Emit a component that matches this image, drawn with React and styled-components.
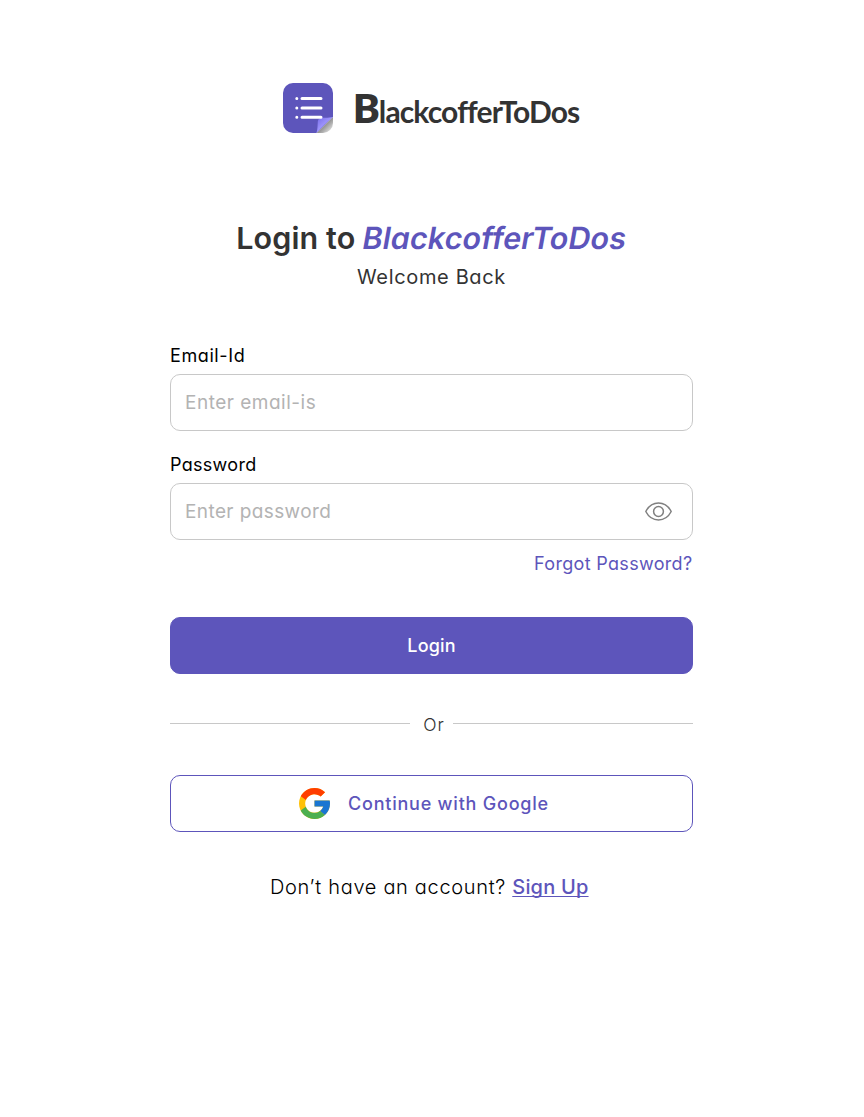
import React from "react";
import styled, { createGlobalStyle } from "styled-components";

const PURPLE = "#5d55bb";
const LINE = "#c8c8c8";

const GlobalStyle = createGlobalStyle`
  *, *::before, *::after { box-sizing: border-box; }
  body {
    margin: 0;
    background: #fff;
    color: #000;
    font-family: Inter, "Open Sans", sans-serif;
    font-feature-settings: "cv11" 1;
  }
`;

const Page = styled.main`
  width: 523px;
  min-height: 1117px;
  margin-left: 170px;
  padding-top: 83px;
  display: flex;
  flex-direction: column;
`;

const Brand = styled.header`
  display: flex;
  gap: 20px;
  height: 50px;
  padding-left: 113px;
`;

const BrandName = styled.span`
  font-family: Lato, sans-serif;
  font-weight: 700;
  font-size: 30px;
  line-height: 50px;
  letter-spacing: -0.85px;
  color: #333;
  white-space: nowrap;
`;

const Initial = styled.span`
  font-size: 40px;
  font-weight: 800;
  letter-spacing: -1px;
`;

const Title = styled.h1`
  margin: 80px 0 0;
  font-size: 30.5px;
  line-height: 49px;
  font-weight: 600;
  letter-spacing: 0.12px;
  color: #333;
  text-align: center;
  white-space: nowrap;
`;

/* Slanted roman letters: the true italic has a descending f. */
const Accent = styled.em`
  display: inline-block;
  font-style: normal;
  transform: skewX(-10deg);
  color: ${PURPLE};
`;

const Subtitle = styled.p`
  margin: 0;
  font-size: 20px;
  line-height: 30px;
  letter-spacing: 0.65px;
  color: #333;
  text-align: center;
`;

const Form = styled.form`
  margin-top: 51px;
  display: flex;
  flex-direction: column;
`;

const Field = styled.div`
  display: flex;
  flex-direction: column;
  margin-bottom: ${(p) => p.$gap || 0}px;
`;

const Label = styled.label`
  height: 31px;
  font-size: 18px;
  line-height: 26px;
  letter-spacing: ${(p) => p.$spacing || 0}px;
`;

const InputBox = styled.div`
  display: flex;
  align-items: center;
  height: 57px;
  padding: 0 20px 0 14px;
  border: 1px solid ${LINE};
  border-radius: 10px;
`;

const Input = styled.input`
  flex: 1;
  min-width: 0;
  padding: 0;
  border: 0;
  outline: 0;
  background: none;
  font: inherit;
  font-feature-settings: inherit;
  font-size: 19px;
  line-height: 28px;
  letter-spacing: ${(p) => p.$spacing || 0}px;
  &::placeholder { color: #b3b3b3; opacity: 1; }
`;

const Forgot = styled.a`
  align-self: flex-end;
  margin-top: 11px;
  margin-right: 0.5px;
  font-size: 18px;
  line-height: 26px;
  letter-spacing: 0.32px;
  color: ${PURPLE};
`;

const Button = styled.button`
  display: flex;
  align-items: center;
  justify-content: center;
  width: 100%;
  height: 57px;
  padding: 0;
  border: 1px solid ${PURPLE};
  border-radius: 10px;
  font: inherit;
  font-feature-settings: inherit;
  font-size: 18px;
  font-weight: 500;
`;

const LoginButton = styled(Button)`
  margin-top: 40px;
  background: ${PURPLE};
  color: #fff;
  letter-spacing: 0.15px;
`;

const GoogleButton = styled(Button)`
  justify-content: flex-start;
  gap: 18px;
  padding-left: 128px;
  background: #fff;
  color: ${PURPLE};
  letter-spacing: 0.78px;
`;

const Divider = styled.div`
  display: flex;
  align-items: center;
  margin: 37px 0 38px;
  height: 26px;
`;

const Rule = styled.span`
  width: 240px;
  height: 1px;
  margin-bottom: 2px;
  background: ${LINE};
`;

const DividerText = styled.span`
  flex: 1;
  padding: 2px 0 0 5px;
  text-align: center;
  font-size: 17.5px;
  line-height: 26px;
  font-weight: 300;
  letter-spacing: 1px;
  color: #333;
`;

const Footer = styled.p`
  margin: 40px 0 0;
  padding-left: 100px;
  font-size: 20px;
  line-height: 30px;
  font-weight: 300;
  letter-spacing: 0.67px;
  white-space: nowrap;
`;

const SignUp = styled.a`
  color: ${PURPLE};
  font-weight: 500;
  letter-spacing: 0.2px;
  text-decoration: underline;
  text-decoration-thickness: 1px;
  text-underline-offset: 2px;
  text-decoration-skip-ink: none;
`;

function LogoMark() {
  return (
    <svg width="50" height="50" viewBox="0 0 50 50" fill="none">
      <defs>
        <linearGradient id="shade" x1="41" y1="41" x2="48" y2="48" gradientUnits="userSpaceOnUse">
          <stop stopColor="#858585" />
          <stop offset="1" stopColor="#e0e0e0" />
        </linearGradient>
        <linearGradient id="fold" x1="35" y1="35" x2="42" y2="43" gradientUnits="userSpaceOnUse">
          <stop stopColor="#7b70ea" />
          <stop offset="1" stopColor="#a49bff" />
        </linearGradient>
      </defs>
      <path d="M10 0H40A10 10 0 0 1 50 10V34L33.500 50H10A10 10 0 0 1 0 40V10A10 10 0 0 1 10 0Z" fill={PURPLE} />
      <path d="M50 34V40A10 10 0 0 1 40 50H33.500Z" fill="url(#shade)" />
      <path d="M33.500 50C34.800 46 34.500 42 34.800 38.500C35.200 35.500 37 34.500 40 34.700C44 35 47 34.500 50 34C45 38 38.500 44.500 33.500 50Z" fill="url(#fold)" />
      <g stroke="#fff" strokeWidth="3" strokeLinecap="round">
        <path d="M19 15.500H38M19 25H38M19 34.300H38" />
        <path d="M13.800 15.500h.01M13.800 25h.01M13.800 34.300h.01" />
      </g>
    </svg>
  );
}

function EyeIcon() {
  return (
    <svg width="27" height="19" viewBox="0 0 27 19" fill="none" stroke="#808080" strokeWidth="1.500">
      <path d="M.8 9.500C3.500 4.300 8.200 1 13.500 1S23.500 4.300 26.200 9.500C23.500 14.700 18.800 18 13.500 18S3.500 14.700.8 9.500Z" strokeLinejoin="round" />
      <circle cx="13.500" cy="9.500" r="4.900" />
    </svg>
  );
}

function GoogleIcon() {
  return (
    <svg width="31" height="31" viewBox="4 4 40 40">
      <path fill="#FFC107" d="M43.611 20.083H42V20H24v8h11.303C33.654 32.657 29.223 36 24 36c-6.627 0-12-5.373-12-12s5.373-12 12-12c3.059 0 5.842 1.154 7.961 3.039l5.657-5.657C34.046 6.053 29.268 4 24 4 12.955 4 4 12.955 4 24s8.955 20 20 20 20-8.955 20-20c0-1.341-.138-2.650-.389-3.917z" />
      <path fill="#FF3D00" d="M6.306 14.691l6.571 4.819C14.655 15.108 18.961 12 24 12c3.059 0 5.842 1.154 7.961 3.039l5.657-5.657C34.046 6.053 29.268 4 24 4 16.318 4 9.656 8.337 6.306 14.691z" />
      <path fill="#4CAF50" d="M24 44c5.166 0 9.860-1.977 13.409-5.192l-6.190-5.238C29.211 35.091 26.715 36 24 36c-5.202 0-9.619-3.317-11.283-7.946l-6.522 5.025C9.505 39.556 16.227 44 24 44z" />
      <path fill="#1976D2" d="M43.611 20.083H42V20H24v8h11.303c-.792 2.237-2.231 4.166-4.087 5.571l6.193 5.237C36.971 39.205 44 34 44 24c0-1.341-.138-2.650-.389-3.917z" />
    </svg>
  );
}

export default function App() {
  return (
    <>
      <GlobalStyle />
      <Page>
        <Brand>
          <LogoMark />
          <BrandName><Initial>B</Initial>lackcofferToDos</BrandName>
        </Brand>
        <Title>Login to <Accent>BlackcofferToDos</Accent></Title>
        <Subtitle>Welcome Back</Subtitle>
        <Form onSubmit={(e) => e.preventDefault()}>
          <Field $gap={21}>
            <Label htmlFor="email" $spacing={0.6}>Email-Id</Label>
            <InputBox>
              <Input id="email" type="email" placeholder="Enter email-is" $spacing={0.5} />
            </InputBox>
          </Field>
          <Field>
            <Label htmlFor="password" $spacing={0.3}>Password</Label>
            <InputBox>
              <Input id="password" type="password" placeholder="Enter password" $spacing={0.4} />
              <EyeIcon />
            </InputBox>
          </Field>
          <Forgot>Forgot Password?</Forgot>
          <LoginButton type="submit">Login</LoginButton>
        </Form>
        <Divider>
          <Rule />
          <DividerText>Or</DividerText>
          <Rule />
        </Divider>
        <GoogleButton type="button">
          <GoogleIcon />
          Continue with Google
        </GoogleButton>
        <Footer>Don’t have an account? <SignUp>Sign Up</SignUp></Footer>
      </Page>
    </>
  );
}
